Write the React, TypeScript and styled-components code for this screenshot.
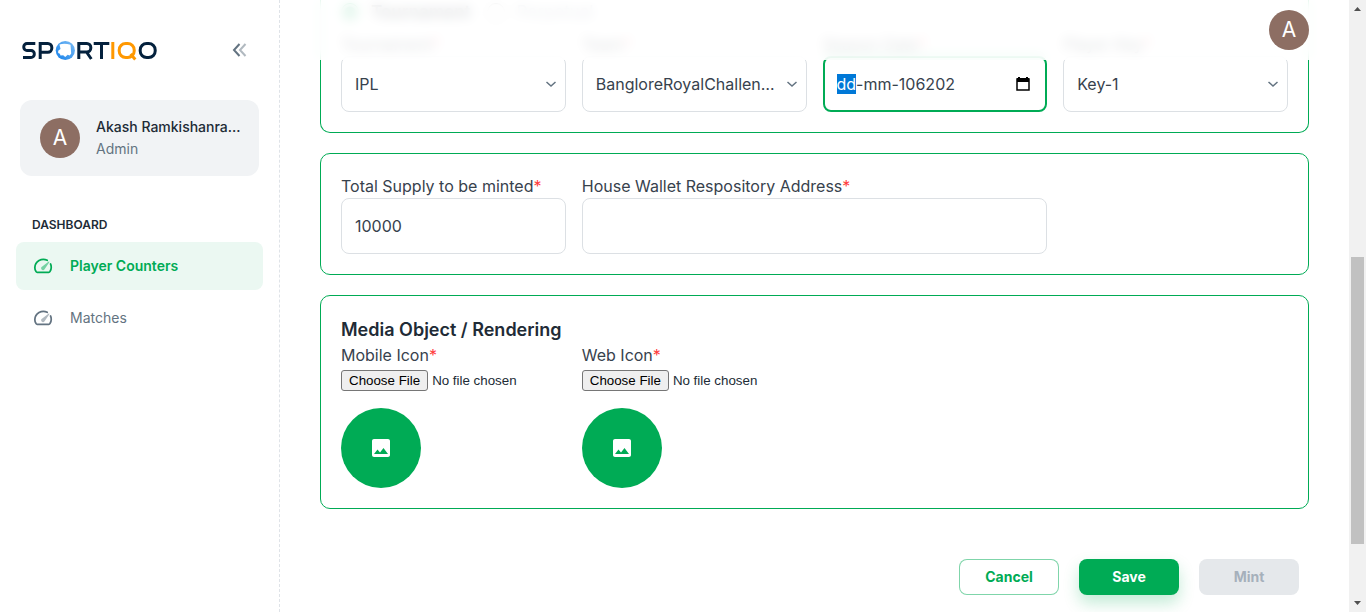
import React, { useEffect, useRef } from 'react';
import styled, { createGlobalStyle, css } from 'styled-components';

const green = '#00AB55';
const ink = '#212B36';
const muted = '#637381';
const line = '#DCE0E4';

const GlobalStyle = createGlobalStyle`
  *, *::before, *::after { box-sizing: border-box; }
  body { margin: 0; overflow: hidden; background: #fff; color: ${ink}; font: 400 16px/24px Inter, "Liberation Sans", sans-serif; }
  button, input, select { font: inherit; color: inherit; }
`;

const Shell = styled.div`
  display: flex;
  height: 100vh;
  overflow: hidden;
`;

const Sidebar = styled.aside`
  flex: 0 0 280px;
  min-width: 0;
  border-right: 1px dashed #DFE3E8;
`;

const Brand = styled.div`
  display: flex;
  align-items: center;
  justify-content: space-between;
  height: 100px;
  padding: 0 29px 0 20px;
`;

const Collapse = styled.button`
  display: flex;
  padding: 0;
  border: 0;
  background: none;
  color: ${muted};
`;

const Account = styled.div`
  display: flex;
  align-items: center;
  gap: 16px;
  height: 76px;
  margin: 0 20px;
  padding: 0 16px 0 20px;
  border-radius: 12px;
  background: #F1F3F5;
`;

const Avatar = styled.span`
  display: flex;
  flex: 0 0 40px;
  align-items: center;
  justify-content: center;
  height: 40px;
  border-radius: 50%;
  background: #8D6E63;
  color: #fff;
  font-size: 21px;
`;

const AccountText = styled.div`
  min-width: 0;
  font-size: 14px;
  line-height: 22px;
  white-space: nowrap;
`;

const AccountName = styled.div`
  font-weight: 500;
`;

const AccountRole = styled.div`
  color: ${muted};
`;

const Nav = styled.nav`
  display: flex;
  flex-direction: column;
  gap: 4px;
  padding: 40px 16px 0;
`;

const NavTitle = styled.div`
  padding: 0 16px 4px;
  font-size: 12px;
  font-weight: 600;
  line-height: 18px;
`;

const NavLink = styled.a<{ $active?: boolean }>`
  display: flex;
  align-items: center;
  gap: 16px;
  height: 48px;
  padding: 0 16px;
  border-radius: 8px;
  color: ${p => (p.$active ? green : muted)};
  background: ${p => (p.$active ? '#EBF8F2' : 'transparent')};
  font-size: 14px;
  font-weight: ${p => (p.$active ? 600 : 400)};
  text-decoration: none;
`;

const Main = styled.main`
  position: relative;
  flex: 1;
  min-width: 0;
  height: 100%;
  overflow: hidden;
`;

const TopBar = styled.header`
  position: absolute;
  top: 0;
  left: 0;
  right: 0;
  display: flex;
  align-items: center;
  justify-content: flex-end;
  height: 60px;
  padding: 0 40px;
  background: rgba(255, 255, 255, 0.84);
  backdrop-filter: blur(6px);
`;

const Form = styled.form`
  display: flex;
  flex-direction: column;
  gap: 20px;
  padding: 0 40px;
`;

const Card = styled.section<{ $continued?: boolean }>`
  padding: 20px;
  border: 1px solid ${green};
  border-radius: 10px;
  ${p => p.$continued && css`
    padding-top: 0;
    border-top: 0;
    border-top-left-radius: 0;
    border-top-right-radius: 0;
  `}
`;

const CardTitle = styled.h2`
  margin: 0;
  font-size: 18px;
  font-weight: 600;
  line-height: 27px;
`;

const RadioRow = styled.div`
  display: flex;
  gap: 16px;
  height: 32px;
`;

const RadioLabel = styled.label<{ $on?: boolean }>`
  display: flex;
  align-items: center;
  gap: 12px;
  height: 24px;
  color: ${p => (p.$on ? ink : '#919EAB')};
  font-size: 17px;
  font-weight: ${p => (p.$on ? 600 : 400)};

  input {
    width: 18px;
    height: 18px;
    margin: 0;
    accent-color: ${green};
  }
`;

const Grid = styled.div`
  display: grid;
  grid-template-columns: repeat(4, minmax(0, 1fr));
  gap: 16px;
`;

const FieldBox = styled.div<{ $span?: number }>`
  display: flex;
  flex-direction: column;
  grid-column: span ${p => p.$span ?? 1};
`;

const Label = styled.label`
  color: #37424D;
`;

const Star = styled.span`
  color: #FF3B3B;
`;

const control = css`
  width: 100%;
  height: 56px;
  padding: 0 13px;
  border: 1px solid ${line};
  border-radius: 8px;
  outline: 0;
  background: transparent;
  color: #37424D;
`;

const TextInput = styled.input`
  ${control}
`;

const ControlWrap = styled.div`
  position: relative;
  display: flex;
  align-items: center;
`;

const Select = styled.select`
  ${control}
  padding-right: 28px;
  appearance: none;
  text-overflow: ellipsis;
`;

const Chevron = styled.svg`
  position: absolute;
  right: 8px;
  pointer-events: none;
`;

const DateInput = styled.input`
  ${control}
  padding: 0 12px;
  border: 2px solid ${green};

  &::selection {
    background: #0078D7;
    color: #fff;
  }
`;

const PickerButton = styled.button`
  position: absolute;
  right: 17px;
  display: flex;
  padding: 0;
  border: 0;
  background: none;
`;

const FileInput = styled.input`
  height: 21px;
  margin: 3px 0 17px;
  font: revert;

  &::file-selector-button {
    height: 21px;
    margin: 0 4px 0 0;
    padding: 1px 7px;
    border: 1px solid #767676;
    border-radius: 3px;
    background: #EFEFEF;
    color: #000;
    font: inherit;
  }
`;

const Preview = styled.div`
  display: flex;
  align-items: center;
  justify-content: center;
  width: 80px;
  height: 80px;
  border-radius: 50%;
  background: ${green};
`;

const Actions = styled.div`
  display: flex;
  justify-content: flex-end;
  gap: 20px;
  padding: 30px 10px;
`;

const Button = styled.button<{ $kind?: 'outline' | 'solid' }>`
  width: 100px;
  height: 36px;
  padding: 0;
  border: ${p => (p.$kind === 'outline' ? '1px solid rgba(0, 171, 85, 0.5)' : '0')};
  border-radius: 8px;
  background: ${p => (p.$kind === 'outline' ? '#fff' : p.$kind === 'solid' ? green : '#E5E8EB')};
  box-shadow: ${p => (p.$kind === 'solid' ? '0 8px 16px rgba(0, 171, 85, 0.24)' : 'none')};
  color: ${p => (p.$kind === 'outline' ? green : p.$kind === 'solid' ? '#fff' : '#A6B0BB')};
  font-size: 14px;
  font-weight: 700;
`;

const Track = styled.div`
  display: flex;
  flex: 0 0 17px;
  flex-direction: column;
  align-items: center;
  background: #F1F1F1;
`;

const Arrow = styled.svg`
  flex: 0 0 17px;
`;

const Rail = styled.div`
  display: flex;
  flex: 1;
  flex-direction: column;
  padding: 240px 0 51px;
`;

const Thumb = styled.div`
  flex: 1;
  width: 13px;
  background: #C1C1C1;
`;

const Logo = () => (
  <svg width="138" height="26" viewBox="0 0 138 26" fill="none" strokeWidth="3" role="img" aria-label="Sportiqo">
    <defs>
      <linearGradient id="ball" x1="0" y1="1" x2="1" y2="0">
        <stop offset="0" stopColor="#1480EA" />
        <stop offset="1" stopColor="#7DBDF5" />
      </linearGradient>
    </defs>
    <g stroke="#04213D">
      <path d="M15.300 6.500H7a3.200 3.200 0 0 0-3.200 3.300v.4A3.200 3.200 0 0 0 7 13.500h4a3.300 3.300 0 0 1 3.300 3.400v.2a3.300 3.300 0 0 1-3.300 3.400H3" />
      <path d="M20.200 22V6.500h7.600a4 4 0 0 1 4 4v.8a4 4 0 0 1-4 4h-7.600" />
      <path d="M58.800 22V6.500h8a4 4 0 0 1 4 4v.6a4 4 0 0 1-4 4h-8M66.500 15l4.800 7M73.700 6.500h15.600M81.500 6.500V22" />
      <rect x="120.200" y="6.500" width="15" height="14" rx="6.500" />
    </g>
    <circle cx="45.300" cy="13.500" r="9.600" fill="url(#ball)" />
    <path d="M39.500 7.500c3-1.200 7-1.200 11 .3l.7 8.700-1.500 2-2-.7-2.500 2.200-2-1.800-2.700.2-.6-1.700-1.700-.6v-2.400l2.300-1.700z" fill="#fff" />
    <g stroke="#FF9800">
      <path d="M92.800 5v17M110.500 17l4.800 5.500" />
      <rect x="99.200" y="6.500" width="15" height="14" rx="6.500" />
    </g>
  </svg>
);

const GaugeIcon = () => (
  <svg width="22" height="22" viewBox="0 0 24 24" fill="none" aria-hidden="true">
    <path d="M16.600 5.800A9.300 9.300 0 0 0 3.100 13.800c0 1.700.4 3 1.300 4.300.3.500.8.800 1.300.8h12.600c.5 0 1-.3 1.300-.8 1-1.400 1.400-2.900 1.400-4.700 0-1.300-.3-2.500-.8-3.600" stroke="currentColor" strokeWidth="1.900" strokeLinecap="round" />
    <path d="M18.300 7.200c.4-.3.900.1.600.6l-5 7.600a2.100 2.100 0 1 1-2.700-2.900z" fill="currentColor" opacity=".5" />
  </svg>
);

const Picture = () => (
  <svg width="24" height="24" viewBox="0 0 24 24" fill="#fff" aria-hidden="true">
    <path d="M21 19V5c0-1.100-.9-2-2-2H5c-1.100 0-2 .9-2 2v14c0 1.100.9 2 2 2h14c1.100 0 2-.9 2-2zM8.500 13.500l2.500 3.010L14.500 12l4.500 6H5l3.500-4.500z" />
  </svg>
);

type SelectFieldProps = { id: string; label: string; value: string };

const SelectField = ({ id, label, value }: SelectFieldProps) => (
  <FieldBox>
    <Label htmlFor={id}>{label}<Star>*</Star></Label>
    <ControlWrap>
      <Select id={id} defaultValue={value}>
        <option>{value}</option>
      </Select>
      <Chevron width="14" height="14" viewBox="0 0 14 14" fill="none" stroke={muted} strokeWidth="1.500" aria-hidden="true">
        <path d="M2.500 5L7 9l4.500-4" />
      </Chevron>
    </ControlWrap>
  </FieldBox>
);

const DateField = () => {
  const ref = useRef<HTMLInputElement>(null);
  useEffect(() => {
    ref.current?.focus();
    ref.current?.setSelectionRange(0, 2);
  }, []);
  return (
    <FieldBox>
      <Label htmlFor="season">Season Date<Star>*</Star></Label>
      <ControlWrap>
        <DateInput id="season" ref={ref} defaultValue="dd-mm-106202" />
        <PickerButton type="button" aria-label="Open calendar">
          <svg width="14" height="16" viewBox="0 0 14 16" fill="none">
            <path d="M1 3h12v11H1z" stroke="#000" strokeWidth="1.500" />
            <path d="M1 2h12v4H1zM2 1h2v2H2zM10 1h2v2h-2z" fill="#000" />
          </svg>
        </PickerButton>
      </ControlWrap>
    </FieldBox>
  );
};

const FileField = ({ id, label }: { id: string; label: string }) => (
  <FieldBox>
    <Label htmlFor={id}>{label}<Star>*</Star></Label>
    <FileInput id={id} type="file" />
    <Preview><Picture /></Preview>
  </FieldBox>
);

export default function App() {
  return (
    <Shell>
      <GlobalStyle />
      <Sidebar>
        <Brand>
          <Logo />
          <Collapse type="button" aria-label="Collapse menu">
            <svg width="20" height="20" viewBox="0 0 20 20" fill="none" stroke="currentColor" strokeWidth="2">
              <path d="M9.500 4L4 10l5.500 6" />
              <path d="M15.500 4L10 10l5.500 6" opacity=".5" />
            </svg>
          </Collapse>
        </Brand>
        <Account>
          <Avatar>A</Avatar>
          <AccountText>
            <AccountName>Akash Ramkishanra...</AccountName>
            <AccountRole>Admin</AccountRole>
          </AccountText>
        </Account>
        <Nav>
          <NavTitle>DASHBOARD</NavTitle>
          <NavLink href="#players" $active><GaugeIcon />Player Counters</NavLink>
          <NavLink href="#matches"><GaugeIcon />Matches</NavLink>
        </Nav>
      </Sidebar>
      <Main>
        <Form>
          <Card $continued>
            <RadioRow>
              <RadioLabel $on><input type="radio" name="scope" defaultChecked />Tournament</RadioLabel>
              <RadioLabel><input type="radio" name="scope" />Perpetual</RadioLabel>
            </RadioRow>
            <Grid>
              <SelectField id="tournament" label="Tournament" value="IPL" />
              <SelectField id="team" label="Team" value="BangloreRoyalChallengers" />
              <DateField />
              <SelectField id="key" label="Player Key" value="Key-1" />
            </Grid>
          </Card>
          <Card>
            <Grid>
              <FieldBox>
                <Label htmlFor="supply">Total Supply to be minted<Star>*</Star></Label>
                <TextInput id="supply" defaultValue="10000" />
              </FieldBox>
              <FieldBox $span={2}>
                <Label htmlFor="wallet">House Wallet Respository Address<Star>*</Star></Label>
                <TextInput id="wallet" />
              </FieldBox>
            </Grid>
          </Card>
          <Card>
            <CardTitle>Media Object / Rendering</CardTitle>
            <Grid>
              <FileField id="mobile-icon" label="Mobile Icon" />
              <FileField id="web-icon" label="Web Icon" />
            </Grid>
          </Card>
          <Actions>
            <Button type="button" $kind="outline">Cancel</Button>
            <Button type="button" $kind="solid">Save</Button>
            <Button type="button" disabled>Mint</Button>
          </Actions>
        </Form>
        <TopBar><Avatar>A</Avatar></TopBar>
      </Main>
      <Track aria-hidden="true">
        <Arrow width="17" height="17" viewBox="0 0 17 17" fill="#505050"><path d="M5 11l3.500-4 3.500 4z" /></Arrow>
        <Rail><Thumb /></Rail>
        <Arrow width="17" height="17" viewBox="0 0 17 17" fill="#505050"><path d="M5 6l3.500 4L12 6z" /></Arrow>
      </Track>
    </Shell>
  );
}
